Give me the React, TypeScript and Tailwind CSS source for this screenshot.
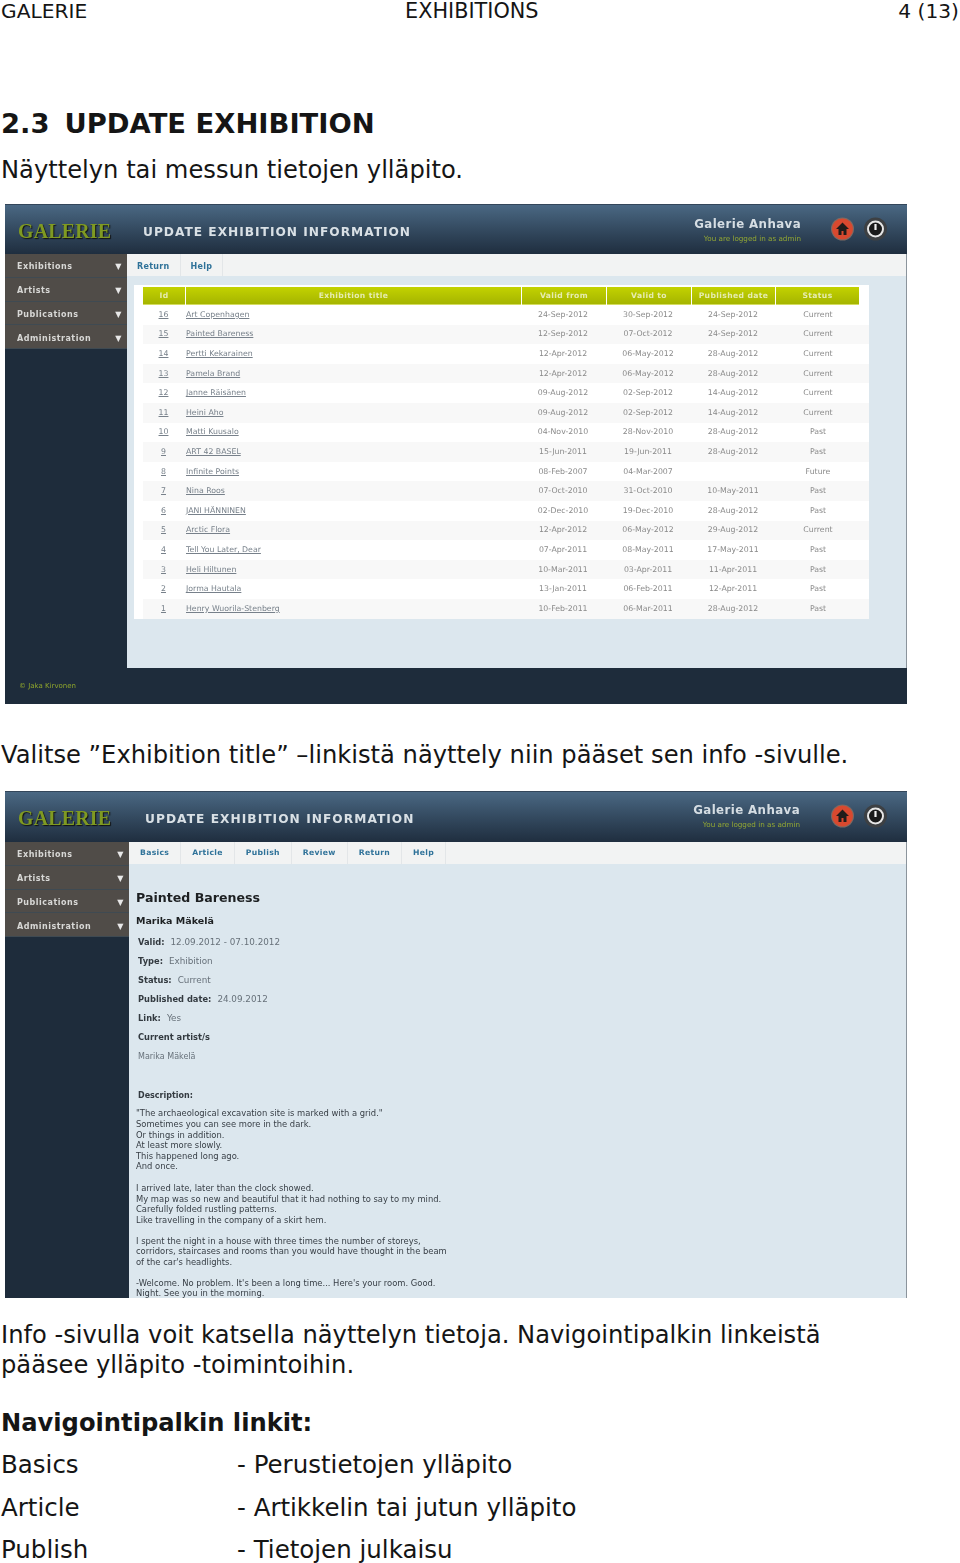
const rows = [
  ["16", "Art Copenhagen", "24-Sep-2012", "30-Sep-2012", "24-Sep-2012", "Current"],
  ["15", "Painted Bareness", "12-Sep-2012", "07-Oct-2012", "24-Sep-2012", "Current"],
  ["14", "Pertti Kekarainen", "12-Apr-2012", "06-May-2012", "28-Aug-2012", "Current"],
  ["13", "Pamela Brand", "12-Apr-2012", "06-May-2012", "28-Aug-2012", "Current"],
  ["12", "Janne Räisänen", "09-Aug-2012", "02-Sep-2012", "14-Aug-2012", "Current"],
  ["11", "Heini Aho", "09-Aug-2012", "02-Sep-2012", "14-Aug-2012", "Current"],
  ["10", "Matti Kuusalo", "04-Nov-2010", "28-Nov-2010", "28-Aug-2012", "Past"],
  ["9", "ART 42 BASEL", "15-Jun-2011", "19-Jun-2011", "28-Aug-2012", "Past"],
  ["8", "Infinite Points", "08-Feb-2007", "04-Mar-2007", "", "Future"],
  ["7", "Nina Roos", "07-Oct-2010", "31-Oct-2010", "10-May-2011", "Past"],
  ["6", "JANI HÄNNINEN", "02-Dec-2010", "19-Dec-2010", "28-Aug-2012", "Past"],
  ["5", "Arctic Flora", "12-Apr-2012", "06-May-2012", "29-Aug-2012", "Current"],
  ["4", "Tell You Later, Dear", "07-Apr-2011", "08-May-2011", "17-May-2011", "Past"],
  ["3", "Heli Hiltunen", "10-Mar-2011", "03-Apr-2011", "11-Apr-2011", "Past"],
  ["2", "Jorma Hautala", "13-Jan-2011", "06-Feb-2011", "12-Apr-2011", "Past"],
  ["1", "Henry Wuorila-Stenberg", "10-Feb-2011", "06-Mar-2011", "28-Aug-2012", "Past"],
];

const heads = ["Id", "Exhibition title", "Valid from", "Valid to", "Published date", "Status"];
const menu = ["Exhibitions", "Artists", "Publications", "Administration"];
const gridCols = "grid grid-cols-[43px_336px_85px_85px_84px_84px]";

function HomeIcon() {
  return (
    <svg width="25" height="26" viewBox="0 0 24 26">
      <circle cx="12" cy="13" r="11.5" fill="#7a6a64" />
      <circle cx="12" cy="13" r="10.5" fill="#d8492f" />
      <path d="M12 6.5 5.5 13H8v6h3v-4h2v4h3v-6h2.5z" fill="#201c1a" />
    </svg>
  );
}

function PowerIcon() {
  return (
    <svg width="25" height="26" viewBox="0 0 24 26">
      <circle cx="12" cy="13" r="11.5" fill="#3d4043" />
      <circle cx="12" cy="13" r="7" fill="#1a1a1a" />
      <circle cx="12" cy="13" r="7.5" fill="none" stroke="#e6e6e6" strokeWidth="2" />
      <path d="M12 8v6" stroke="#f0f0f0" strokeWidth="2.2" />
    </svg>
  );
}

function Shell({ tabs, titleClass, side, tabClass, rightClass, headerClass, children, footer }: { tabs: string[]; titleClass: string; side: string; tabClass: string; rightClass: string; headerClass: string; children: React.ReactNode; footer?: boolean }) {
  return (
    <div className="ml-[5px] w-[902px] flex flex-col bg-[#1e2c3b] overflow-hidden blur-[0.6px] font-['DejaVu_Sans',sans-serif] leading-none">
      <div className={headerClass}>
        <div className="w-[122px] shrink-0 mt-[4px] pl-[13px] font-['Liberation_Serif',serif] font-bold text-[19.9px] tracking-[0.2px] text-[#7f9a22] [text-shadow:1px_1px_1px_#111]">GALERIE</div>
        <div className={titleClass}>UPDATE EXHIBITION INFORMATION</div>
        <div className={rightClass}>
          <div className="text-[11.8px] leading-[15px] font-bold tracking-[0.4px] text-[#d5dde3]">Galerie Anhava</div>
          <div className="mt-[2px] text-[7.2px] leading-[9px] text-[#93a833]">You are logged in as admin</div>
        </div>
        <div className="flex gap-[8px] mr-[19px] mb-[2px]">
          <HomeIcon />
          <PowerIcon />
        </div>
      </div>
      <div className="flex-1 flex min-h-0">
        <div className={side}>
          {menu.map((m) => (
            <div key={m} className="h-[23.8px] pt-[4px] flex items-center justify-between pl-[12px] pr-[5px] bg-[#504c48] border-b border-[#3f4a52] text-[8px] font-bold tracking-[0.5px] text-[#d8d8d6]">
              <span>{m}</span>
              <span className="text-[8px] text-[#e8e8e8]">▼</span>
            </div>
          ))}
        </div>
        <div className="flex-1 min-w-0 flex flex-col bg-[#dce7ee] border-r border-[#8b949c]">
          <div className="h-[22px] shrink-0 flex bg-[#f2f3f3]">
            {tabs.map((t) => (
              <div key={t} className={tabClass}>{t}</div>
            ))}
          </div>
          {children}
        </div>
      </div>
      {footer && (
        <div className="h-[36px] shrink-0 flex items-center pl-[14px] text-[7px] text-[#8ea52c]">© Jaka Kirvonen</div>
      )}
    </div>
  );
}

function ListShot() {
  return (
    <Shell
      tabs={["Return", "Help"]}
      headerClass="h-[50px] shrink-0 flex items-center bg-gradient-to-b from-[#4a6883] to-[#1f2e3f] border-t border-[#33465a]"
      titleClass="ml-[16px] mt-[6px] text-[12.2px] font-bold tracking-[1px] text-[#d9e0e5]"
      rightClass="ml-auto flex flex-col items-end mr-[29px]"
      tabClass="flex items-center pt-[3px] px-[10px] border-r border-[#e3e6e8] text-[8px] font-bold tracking-[0.3px] text-[#2f7299]"
      side="w-[122px] shrink-0"
      footer
    >
      <div className="h-[392px] pt-[9px] pl-[7px]">
        <div className="w-[735px] bg-white pt-[2px] pl-[9px]">
          <div className={gridCols}>
            {heads.map((h) => (
              <div key={h} className="h-[18px] mr-[1px] flex items-center justify-center bg-gradient-to-b from-[#c3d200] to-[#a5b500] border-b border-[#d4dc60] text-[7.6px] font-bold tracking-[0.4px] text-[#e6ecb0]">{h}</div>
            ))}
          </div>
          {rows.map((r, i) => (
            <div key={r[0]} className={`${gridCols} h-[19.6px] items-center text-[7.8px] text-[#8a8a8a] ${i % 2 === 1 ? "bg-[#f8f8f8]" : ""}`}>
              <div className="pr-[2px] text-center text-[#77808a] underline">{r[0]}</div>
              <div className="text-[#77808a] underline">{r[1]}</div>
              <div className="pr-[3px] text-center">{r[2]}</div>
              <div className="pr-[3px] text-center">{r[3]}</div>
              <div className="pr-[2px] text-center">{r[4]}</div>
              <div className="text-center">{r[5]}</div>
            </div>
          ))}
        </div>
      </div>
    </Shell>
  );
}

function Field({ label, value }: { label: string; value?: string }) {
  return (
    <div className="h-[19.1px] flex items-center gap-[6px] pl-[2px]">
      <span className="text-[8.3px] font-bold text-[#333a40]">{label}</span>
      {value && <span className="text-[8.8px] text-[#67717a]">{value}</span>}
    </div>
  );
}

function InfoShot() {
  return (
    <Shell
      tabs={["Basics", "Article", "Publish", "Review", "Return", "Help"]}
      headerClass="h-[51px] shrink-0 flex items-center bg-gradient-to-b from-[#4a6883] to-[#1f2e3f] border-t border-[#33465a]"
      titleClass="ml-[18px] mt-[4px] text-[12.2px] font-bold tracking-[1.05px] text-[#d9e0e5]"
      rightClass="ml-auto flex flex-col items-end mr-[30px] mb-[2px]"
      tabClass="flex items-center px-[11px] border-r border-[#e3e6e8] text-[7.7px] font-bold tracking-[0.3px] text-[#2f7299]"
      side="w-[124px] shrink-0"
    >
      <div className="h-[434px] pl-[7px] overflow-hidden">
        <div className="pt-[26px] text-[12.6px] leading-[16px] font-bold text-[#1d2022]">Painted Bareness</div>
        <div className="pt-[9px] pb-[5.5px] text-[9.5px] leading-[12px] font-bold text-[#1d2022]">Marika Mäkelä</div>
        <Field label="Valid:" value="12.09.2012 - 07.10.2012" />
        <Field label="Type:" value="Exhibition" />
        <Field label="Status:" value="Current" />
        <Field label="Published date:" value="24.09.2012" />
        <Field label="Link:" value="Yes" />
        <Field label="Current artist/s" />
        <div className="h-[19.1px] flex items-center pl-[2px] text-[8px] text-[#67717a]">Marika Mäkelä</div>
        <div className="mt-[23.5px] pl-[2px] text-[8px] leading-[12px] font-bold text-[#333a40]">Description:</div>
        <div className="mt-[6.7px] text-[8.4px] leading-[10.6px] text-[#363d44]">
          <p>"The archaeological excavation site is marked with a grid."</p>
          <p>Sometimes you can see more in the dark.</p>
          <p>Or things in addition.</p>
          <p>At least more slowly.</p>
          <p>This happened long ago.</p>
          <p>And once.</p>
          <p className="mt-[11px]">I arrived late, later than the clock showed.</p>
          <p>My map was so new and beautiful that it had nothing to say to my mind.</p>
          <p>Carefully folded rustling patterns.</p>
          <p>Like travelling in the company of a skirt hem.</p>
          <p className="mt-[10.6px]">I spent the night in a house with three times the number of storeys,</p>
          <p>corridors, staircases and rooms than you would have thought in the beam</p>
          <p>of the car's headlights.</p>
          <p className="mt-[10.2px]">-Welcome. No problem. It's been a long time... Here's your room. Good.</p>
          <p>Night. See you in the morning.</p>
        </div>
      </div>
    </Shell>
  );
}

export default function App() {
  return (
    <div className="w-[960px] h-[1563px] overflow-hidden bg-white text-[#151515] font-['DejaVu_Sans',sans-serif] text-[24.2px] leading-[30px]">
      <div className="grid grid-cols-[405px_1fr_auto] h-[22px] text-[20.2px] leading-[22px]">
        <span className="pl-[1px]">GALERIE</span>
        <span className="text-[20.8px]">EXHIBITIONS</span>
        <span className="pr-[1px]">4 (13)</span>
      </div>
      <h2 className="mt-[87px] pl-[1px] font-bold text-[27.4px] leading-[30px]">2.3<span className="ml-[15px]">UPDATE EXHIBITION</span></h2>
      <p className="mt-[16px] pl-[1px]">Näyttelyn tai messun tietojen ylläpito.</p>
      <div className="mt-[19px]"><ListShot /></div>
      <p className="mt-[36px] pl-[1px]">Valitse ”Exhibition title” –linkistä näyttely niin pääset sen info -sivulle.</p>
      <div className="mt-[21px]"><InfoShot /></div>
      <p className="mt-[22px] pl-[1px]">Info -sivulla voit katsella näyttelyn tietoja. Navigointipalkin linkeistä<br />pääsee ylläpito -toimintoihin.</p>
      <h3 className="mt-[28px] pl-[1px] font-bold">Navigointipalkin linkit:</h3>
      <div className="mt-[12px] pl-[1px] grid grid-cols-[236px_1fr] auto-rows-[42.5px] text-[24.5px]">
        <span>Basics</span><span>- Perustietojen ylläpito</span>
        <span>Article</span><span>- Artikkelin tai jutun ylläpito</span>
        <span>Publish</span><span>- Tietojen julkaisu</span>
      </div>
    </div>
  );
}
